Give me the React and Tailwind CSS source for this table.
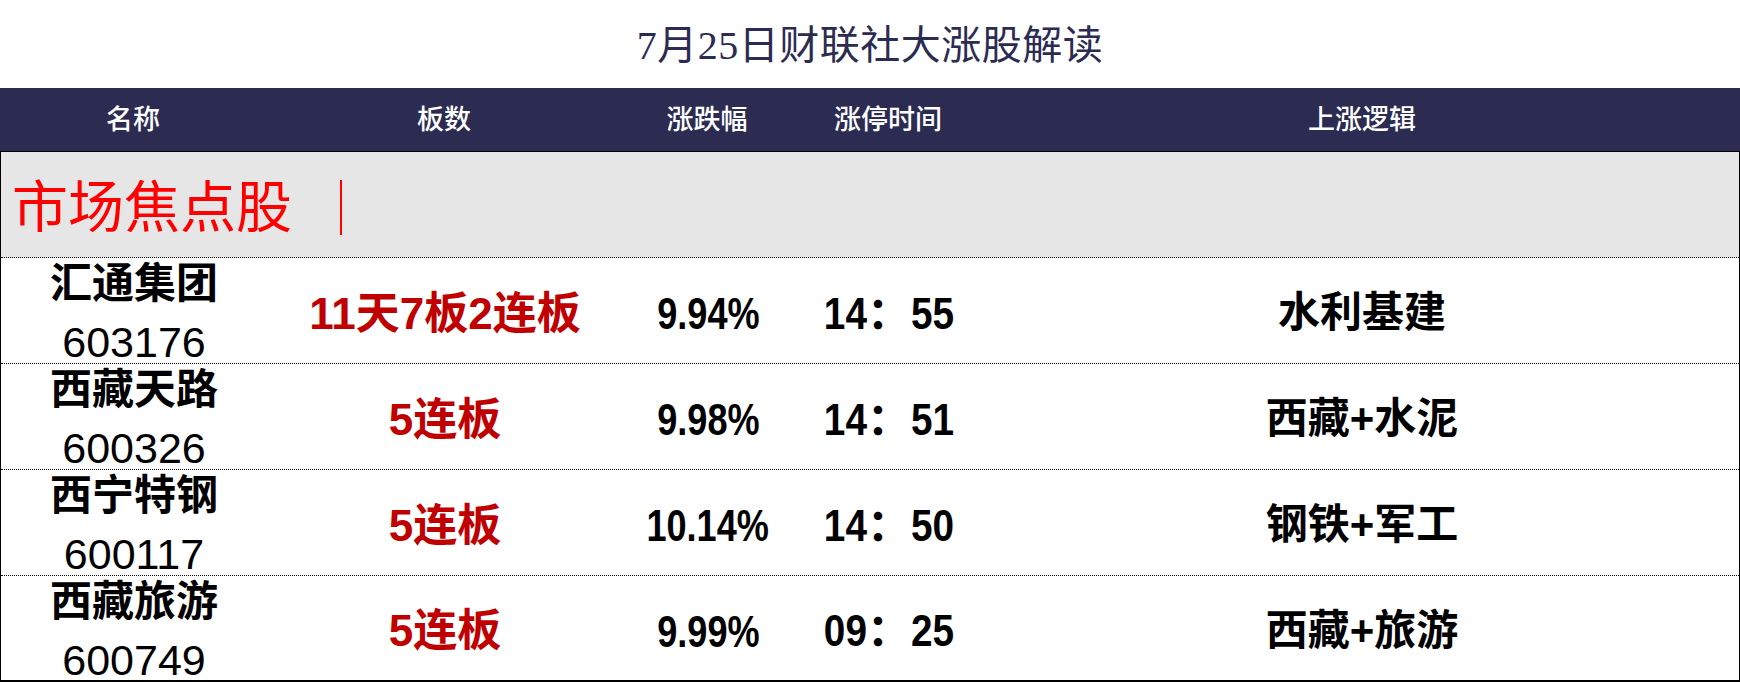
import React from "react";

// ─── data ────────────────────────────────────────────────────────────────────
const rows = [
  { name: "汇通集团", code: "603176", board: "11天7板2连板", pct: "9.94%",  time: ["14", "55"], logic: "水利基建" },
  { name: "西藏天路", code: "600326", board: "5连板",        pct: "9.98%",  time: ["14", "51"], logic: "西藏+水泥" },
  { name: "西宁特钢", code: "600117", board: "5连板",        pct: "10.14%", time: ["14", "50"], logic: "钢铁+军工" },
  { name: "西藏旅游", code: "600749", board: "5连板",        pct: "9.99%",  time: ["09", "25"], logic: "西藏+旅游" },
];

const cols = "grid grid-cols-[266px_356px_170px_192px_1fr]";
const sans = { fontFamily: "'Liberation Sans', 'Noto Sans CJK SC', sans-serif" };
const serif = { fontFamily: "'Liberation Serif', 'Noto Sans CJK SC', serif" };

function Row({ r, last }) {
  return (
    <div
      className={`${cols} ${last ? "h-[106px] border-b-2 border-solid" : "h-[106px] border-b border-dotted"} border-black text-black`}
    >
      {/* name + code */}
      <div className="flex flex-col items-center">
        <div className="text-[42px] leading-[52px] font-bold">{r.name}</div>
        <div className="text-[43px] leading-[40px] mt-[12px]">{r.code}</div>
      </div>
      {/* boards */}
      <div className="flex items-center justify-center pt-[6px]">
        <span className="text-[44px] leading-none font-bold text-[#c00000]">{r.board}</span>
      </div>
      {/* pct */}
      <div className="flex items-center justify-center pt-[7px]">
        <span className="inline-block text-[44px] leading-none font-bold scale-x-[0.82]">{r.pct}</span>
      </div>
      {/* time */}
      <div className="flex items-center justify-center pt-[6px]">
        <span className="text-[44px] leading-none font-bold flex items-center">
          <span className="inline-block scale-x-[0.88] origin-right">{r.time[0]}</span>
          <span>：</span>
          <span className="inline-block scale-x-[0.88] origin-left">{r.time[1]}</span>
        </span>
      </div>
      {/* logic */}
      <div className="flex items-center justify-center pt-[5px]">
        <span className="text-[42px] leading-none font-bold">{r.logic}</span>
      </div>
    </div>
  );
}

export default function App() {
  return (
    <div className="w-[1740px] h-[682px] bg-white overflow-hidden" style={sans}>
      {/* ── Title ── */}
      <div className="h-[88px] flex items-center justify-center pt-[3px]">
        <h1 className="text-[40px] leading-none font-normal text-[#2c2b52] tracking-[0.5px]" style={serif}>
          7月25日财联社大涨股解读
        </h1>
      </div>

      {/* ── Header ── */}
      <div className={`${cols} h-[64px] bg-[#2c2b52] border-b border-black text-white items-center`}>
        {["名称", "板数", "涨跌幅", "涨停时间", "上涨逻辑"].map((h) => (
          <div key={h} className="text-center text-[27px] leading-none font-medium pt-[1px]">{h}</div>
        ))}
      </div>

      {/* ── Body ── */}
      <div className="border-l border-r border-black">
        <div className="h-[106px] bg-[#e6e6e6] border-b border-dotted border-black flex items-center pl-[11px] pt-[6px]">
          <span className="text-[56px] leading-none text-[#ff0000]" style={serif}>市场焦点股</span>
          <span className="ml-[48px] w-[2px] h-[55px] bg-[#ff0000]" />
        </div>
        {rows.map((r, i) => (
          <Row key={r.code} r={r} last={i === rows.length - 1} />
        ))}
      </div>
    </div>
  );
}
